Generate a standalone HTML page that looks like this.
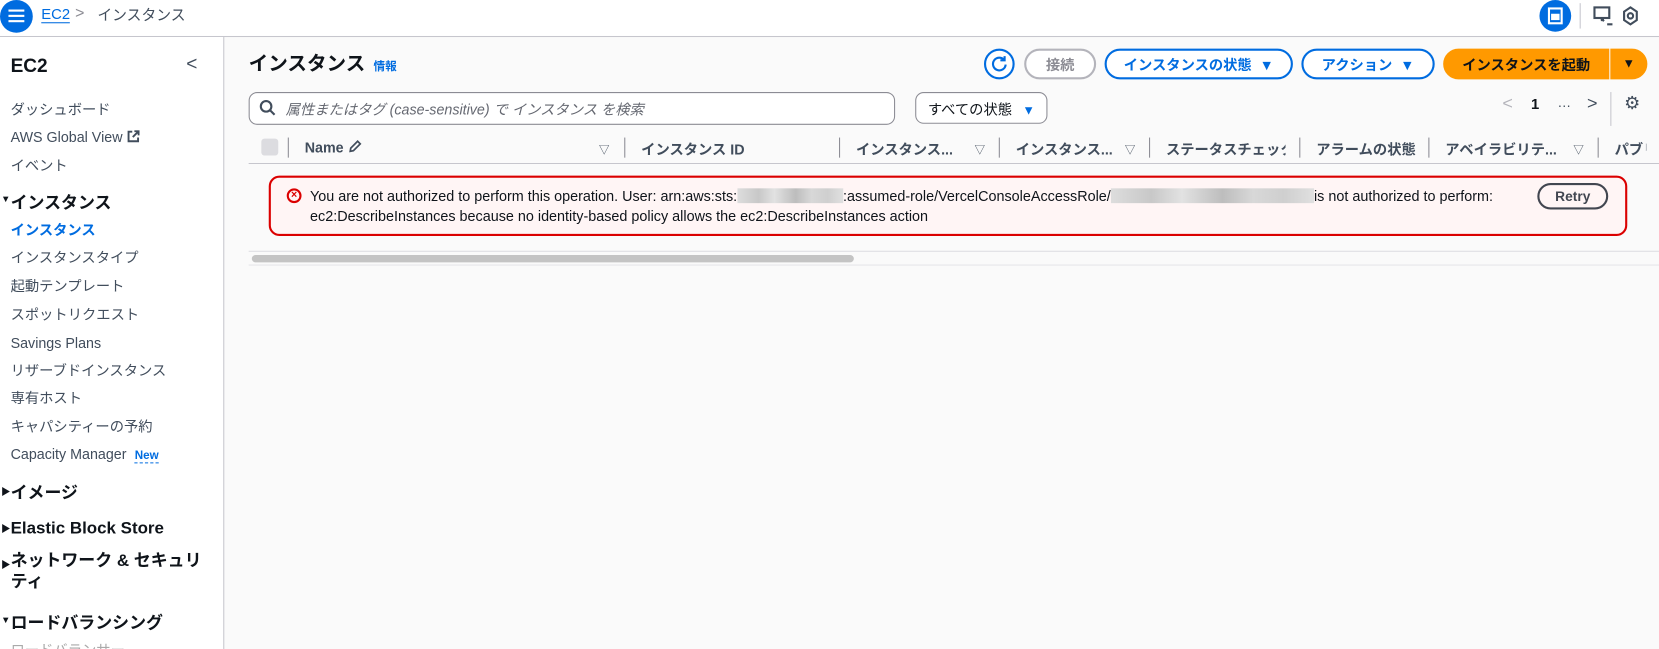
<!DOCTYPE html>
<html><head><meta charset="utf-8"><style>
*{box-sizing:border-box;margin:0;padding:0}
html,body{width:1659px;height:649px;overflow:hidden;background:#fafafa}
body{font-family:"Liberation Sans","Noto Sans CJK JP",sans-serif;color:#0f141a;position:relative}
#w{position:absolute;left:0;top:0;width:1568px;height:614px;transform:scale(1.05804);transform-origin:0 0}
.a{position:absolute;white-space:nowrap}
.top{position:absolute;left:0;top:0;width:1568px;height:35px;background:#fff;border-bottom:1px solid #c6c6cd}
.side{position:absolute;left:0;top:35px;width:212px;height:580px;background:#fff;border-right:1px solid #c6c6cd}
.ni{font-size:13.5px;color:#414d5c;left:10px}
.sec{font-size:16px;font-weight:bold;left:10px;color:#0f141a}
.car{font-size:9px;left:1px;color:#0f141a}
.btn{position:absolute;top:46px;height:29px;border:2px solid #006ce0;border-radius:16px;color:#006ce0;font-weight:bold;font-size:13.5px;display:flex;align-items:center;justify-content:center;background:#fff;padding-bottom:2px}
.th{font-size:13.5px;font-weight:bold;color:#414d5c;top:130px}
.dv{position:absolute;top:130px;width:1px;height:19px;background:#8c8c94}
.tri{font-size:10px;color:#414d5c;top:133px}
.blur{display:inline-block;height:14px;vertical-align:-2px;background:linear-gradient(90deg,#ddd,#c8c8c8 20%,#e2e2e2 35%,#bdbdbd 55%,#d8d8d8 70%,#cfcfcf 85%,#e0e0e0)}
</style></head><body><div id="w">
<div class="top"></div>
<div class="a" style="left:0;top:0;width:31px;height:31px;border-radius:50%;background:#006ce0"></div>
<div class="a" style="left:8px;top:9px;width:15px;height:2px;background:#fff;box-shadow:0 5px 0 #fff,0 10px 0 #fff"></div>
<div class="a" style="left:39px;top:5px;font-size:14px;color:#006ce0;border-bottom:1px solid #006ce0;line-height:16px">EC2</div>
<div class="a" style="left:71px;top:4px;font-size:15px;color:#8c8c94">&gt;</div>
<div class="a" style="left:92px;top:4px;font-size:14px;color:#414d5c">インスタンス</div>
<div class="a" style="left:1455px;top:0;width:30px;height:30px;border-radius:50%;background:#006ce0"></div>
<div class="a" style="left:1463px;top:7px;width:14px;height:16px;border:2px solid #fff"></div>
<div class="a" style="left:1466px;top:13px;width:8px;height:6px;background:#fff"></div>
<div class="a" style="left:1493px;top:3px;width:1px;height:24px;background:#c6c6cd"></div>
<svg class="a" style="left:1505px;top:5px" width="20" height="20" viewBox="0 0 20 20" fill="none" stroke="#414d5c" stroke-width="2"><rect x="2" y="2" width="14" height="10"/><path d="M8 12l3 3M8 14h3M14 18h5"/></svg>
<svg class="a" style="left:1532px;top:5px" width="18" height="20" viewBox="0 0 18 20" fill="none" stroke="#414d5c" stroke-width="2"><path d="M9 2l6 4v8l-6 4-6-4V6z"/><circle cx="9" cy="10" r="2.5"/></svg>

<div class="side"></div>
<div class="a" style="left:10px;top:52px;font-size:18px;font-weight:bold">EC2</div>
<div class="a" style="left:176px;top:50px;font-size:18px;color:#414d5c">&lt;</div>
<div class="a ni" style="top:92px">ダッシュボード</div>
<div class="a ni" style="top:122px">AWS Global View <svg width="12" height="12" viewBox="0 0 12 12" fill="none" stroke="#414d5c" stroke-width="1.8" style="vertical-align:-1px"><path d="M5 1.5H1.5v9h9V7M7 1h4v4M11 1L5.5 6.5"/></svg></div>
<div class="a ni" style="top:145px">イベント</div>
<div class="a car" style="top:183px">▼</div><div class="a sec" style="top:178px">インスタンス</div>
<div class="a ni" style="top:206px;color:#006ce0;font-weight:bold">インスタンス</div>
<div class="a ni" style="top:232px">インスタンスタイプ</div>
<div class="a ni" style="top:259px">起動テンプレート</div>
<div class="a ni" style="top:286px">スポットリクエスト</div>
<div class="a ni" style="top:317px">Savings Plans</div>
<div class="a ni" style="top:339px">リザーブドインスタンス</div>
<div class="a ni" style="top:365px">専有ホスト</div>
<div class="a ni" style="top:392px">キャパシティーの予約</div>
<div class="a ni" style="top:422px">Capacity Manager <span style="color:#006ce0;font-weight:bold;font-size:11px;border-bottom:1px dashed #006ce0;margin-left:4px">New</span></div>
<div class="a car" style="top:458px">▶</div><div class="a sec" style="top:452px">イメージ</div>
<div class="a car" style="top:493px">▶</div><div class="a sec" style="top:491px">Elastic Block Store</div>
<div class="a car" style="top:527px">▶</div><div class="a sec" style="top:521px;line-height:20px">ネットワーク &amp; セキュリ<br>ティ</div>
<div class="a car" style="top:581px">▼</div><div class="a sec" style="top:575px">ロードバランシング</div>
<div class="a ni" style="top:603px;color:#aaa">ロードバランサー</div>

<div class="a" style="left:235px;top:46px;font-size:18.5px;font-weight:bold">インスタンス</div>
<div class="a" style="left:353px;top:54px;font-size:11px;font-weight:bold;color:#006ce0">情報</div>

<div class="a" style="left:930px;top:46px;width:29px;height:29px;border:2px solid #006ce0;border-radius:50%;background:#fff"></div>
<svg class="a" style="left:936px;top:52px" width="17" height="17" viewBox="0 0 17 17" fill="none" stroke="#006ce0" stroke-width="2"><path d="M13 4.5A6 6 0 1 0 14.5 9"/><path d="M13.5 1v4h-4"/></svg>
<div class="btn" style="left:968px;width:68px;border-color:#b4b4bb;color:#8c8c94">接続</div>
<div class="btn" style="left:1044px;width:178px">インスタンスの状態 &nbsp;▼</div>
<div class="btn" style="left:1230px;width:126px">アクション &nbsp;▼</div>
<div class="btn" style="left:1364px;width:157px;background:#ff9900;border-color:#ff9900;color:#0f141a;border-radius:16px 0 0 16px">インスタンスを起動</div>
<div class="btn" style="left:1522px;width:35px;background:#ff9900;border-color:#ff9900;color:#0f141a;border-radius:0 16px 16px 0;font-size:12px">▼</div>

<div class="a" style="left:235px;top:87px;width:611px;height:31px;border:1px solid #8c8c94;border-radius:8px;background:#fff"></div>
<svg class="a" style="left:245px;top:94px" width="16" height="16" viewBox="0 0 16 16" fill="none" stroke="#414d5c" stroke-width="2"><circle cx="6.5" cy="6.5" r="5"/><path d="M10 10l4.5 4.5"/></svg>
<div class="a" style="left:270px;top:92px;font-size:13.5px;font-style:italic;color:#656871">属性またはタグ (case-sensitive) で インスタンス を検索</div>
<div class="a" style="left:865px;top:87px;width:125px;height:30px;border:1px solid #8c8c94;border-radius:8px;background:#fff"></div>
<div class="a" style="left:877px;top:92px;font-size:13.5px;color:#0f141a">すべての状態 <span style="color:#006ce0;font-size:12px;margin-left:6px">▼</span></div>
<div class="a" style="left:1420px;top:88px;font-size:17px;color:#b4b4bb">&lt;</div>
<div class="a" style="left:1447px;top:90px;font-size:14px;font-weight:bold">1</div>
<div class="a" style="left:1472px;top:89px;font-size:13px;color:#414d5c">…</div>
<div class="a" style="left:1500px;top:88px;font-size:17px;color:#414d5c">&gt;</div>
<div class="a" style="left:1522px;top:87px;width:1px;height:32px;background:#c6c6cd"></div>
<div class="a" style="left:1535px;top:88px;font-size:17px;color:#414d5c">⚙</div>

<div class="a" style="left:247px;top:131px;width:16px;height:16px;background:#dcdce0;border-radius:3px"></div>
<div class="dv" style="left:272px"></div>
<div class="a th" style="left:288px;top:132px">Name <svg width="13" height="13" viewBox="0 0 13 13" fill="none" stroke="#414d5c" stroke-width="1.6" style="vertical-align:-1px"><path d="M2 11l.5-3L9 1.5l2.5 2.5L5 10.5z"/></svg></div>
<div class="a tri" style="left:566px">▽</div><div class="dv" style="left:590px"></div>
<div class="a th" style="left:606px">インスタンス ID</div><div class="dv" style="left:793px"></div>
<div class="a th" style="left:809px">インスタンス...</div><div class="a tri" style="left:921px">▽</div><div class="dv" style="left:944px"></div>
<div class="a th" style="left:960px">インスタンス...</div><div class="a tri" style="left:1063px">▽</div><div class="dv" style="left:1086px"></div>
<div class="a th" style="left:1102px;width:113px;overflow:hidden">ステータスチェック</div><div class="dv" style="left:1228px"></div>
<div class="a th" style="left:1244px">アラームの状態</div><div class="dv" style="left:1350px"></div>
<div class="a th" style="left:1366px;width:115px;overflow:hidden">アベイラビリテ...</div><div class="a tri" style="left:1487px">▽</div><div class="dv" style="left:1510px"></div>
<div class="a th" style="left:1526px;width:30px;overflow:hidden">パブリ</div>
<div class="a" style="left:235px;top:154px;width:1411px;height:1px;background:#c6c6cd"></div>

<div class="a" style="left:254px;top:166px;width:1284px;height:57px;border:2px solid #db0000;border-radius:10px;background:#fff5f5"></div>
<div class="a" style="left:271px;top:178px;width:14px;height:14px;border:2px solid #db0000;border-radius:50%;color:#db0000;font-size:10px;font-weight:bold;line-height:10px;text-align:center">×</div>
<div class="a" style="left:293px;top:176px;font-size:13.6px;line-height:19px;color:#0f141a">You are not authorized to perform this operation. User: arn:aws:sts:<span class="blur" style="width:100px"></span>:assumed-role/VercelConsoleAccessRole/<span class="blur" style="width:192px"></span>is not authorized to perform:<br>ec2:DescribeInstances because no identity-based policy allows the ec2:DescribeInstances action</div>
<div class="a" style="left:1453px;top:173px;width:67px;height:25px;border:2px solid #424650;border-radius:14px;font-size:13px;font-weight:bold;color:#424650;text-align:center;line-height:21px;background:#fff5f5">Retry</div>

<div class="a" style="left:235px;top:237px;width:1411px;height:1px;background:#dedee3"></div>
<div class="a" style="left:238px;top:241px;width:569px;height:7px;background:#c4c4c4;border-radius:4px"></div>
<div class="a" style="left:235px;top:250px;width:1411px;height:1px;background:#e6e6ea"></div>
</div></body></html>
